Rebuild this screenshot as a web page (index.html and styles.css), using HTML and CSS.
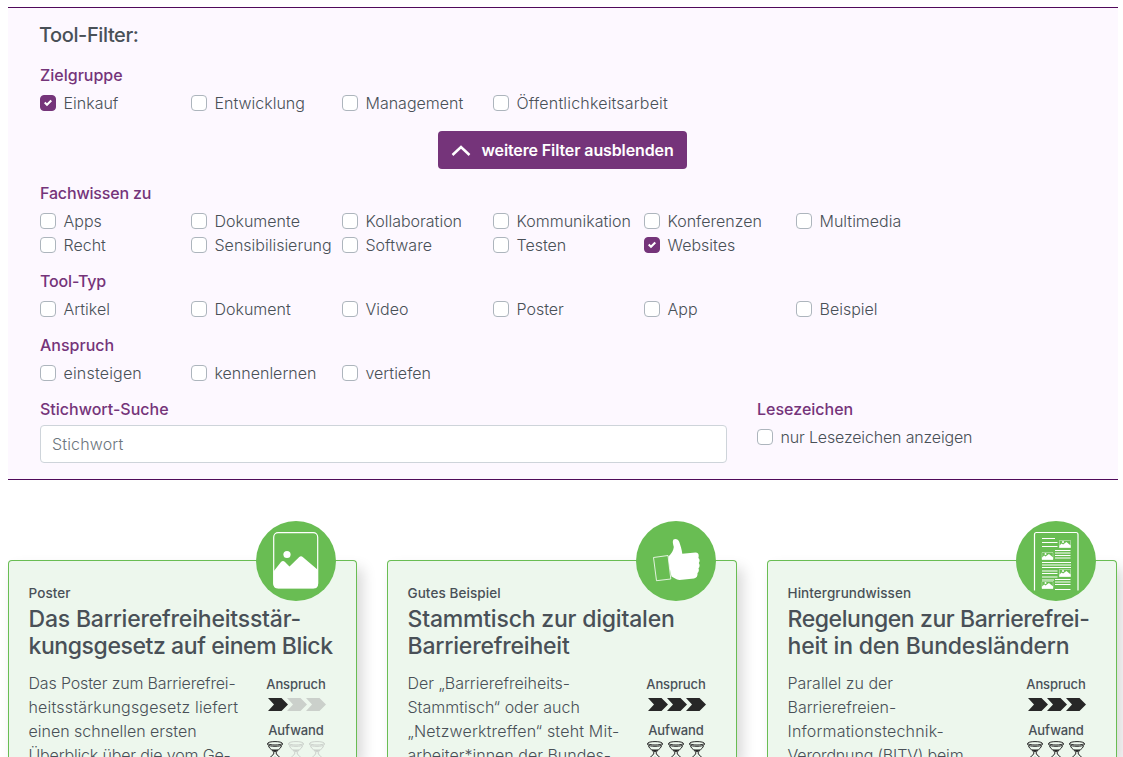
FILE: index.html
```html
<!DOCTYPE html>
<html lang="de">
<head>
    <meta charset="UTF-8">
    <meta name="viewport" content="width=device-width, initial-scale=1.0">
    <title>Tool-Filter</title>
    <link rel="stylesheet" href="styles.css">
</head>
<body>
    <svg class="sprite" xmlns="http://www.w3.org/2000/svg">
        <symbol id="arrow" viewBox="0 0 20 13">
            <path d="M0 0h13.5L20 6.5 13.5 13H0l6-6.5z"/>
        </symbol>
        <symbol id="hourglass" viewBox="0 0 16 24">
            <g fill="none" stroke="currentColor" stroke-width="1">
                <ellipse cx="8" cy="2.300" rx="7.300" ry="1.700"/>
                <path d="M.7 2.300v1.500C2 5.800 14 5.800 15.300 3.800V2.300M1.500 5C2.500 8.500 6.500 9 7 12c-.5 3-5.500 4-6.300 8M14.500 5C13.500 8.500 9.500 9 9 12c.5 3 5.500 4 6.300 8"/>
                <ellipse cx="8" cy="21.500" rx="7.300" ry="1.700"/>
            </g>
            <path d="M4.500 8.200q3.500.8 7 0L8.500 11h-1zM8 15.500l2.500 3h-5z" fill="currentColor"/>
        </symbol>
        <symbol id="picture" viewBox="0 0 12 8">
            <rect x=".3" y=".3" width="11.4" height="7.4" rx="1" fill="none" stroke="#fff" stroke-width=".5"/>
            <circle cx="4" cy="2.1" r="1" fill="#fff"/>
            <path d="M.3 5.7l2.3-2.3 1.500 1.200L7.400 2l4.300 3.600v2.100H.3z" fill="#fff"/>
        </symbol>
    </svg>

    <form class="filter">
        <h2>Tool-Filter:</h2>

        <div class="group">
            <h3>Zielgruppe</h3>
            <div class="options">
                <label><input type="checkbox" checked><span>Einkauf</span></label>
                <label><input type="checkbox"><span>Entwicklung</span></label>
                <label><input type="checkbox"><span>Management</span></label>
                <label><input type="checkbox"><span class="wide">Öffentlichkeitsarbeit</span></label>
            </div>
        </div>

        <button type="button" class="button">
            <svg width="20" height="12" viewBox="0 0 20 12"><path d="M1.500 11L10 3l8.500 8" fill="none" stroke="#fff" stroke-width="2.500"/></svg>
            <span>weitere Filter ausblenden</span>
        </button>

        <div class="group">
            <h3 class="narrow">Fachwissen zu</h3>
            <div class="options">
                <label><input type="checkbox"><span>Apps</span></label>
                <label><input type="checkbox"><span>Dokumente</span></label>
                <label><input type="checkbox"><span>Kollaboration</span></label>
                <label><input type="checkbox"><span>Kommunikation</span></label>
                <label><input type="checkbox"><span>Konferenzen</span></label>
                <label><input type="checkbox"><span>Multimedia</span></label>
                <label><input type="checkbox"><span>Recht</span></label>
                <label><input type="checkbox"><span>Sensibilisierung</span></label>
                <label><input type="checkbox"><span>Software</span></label>
                <label><input type="checkbox"><span>Testen</span></label>
                <label><input type="checkbox" checked><span>Websites</span></label>
            </div>
        </div>

        <div class="group">
            <h3 class="narrow">Tool-Typ</h3>
            <div class="options">
                <label><input type="checkbox"><span>Artikel</span></label>
                <label><input type="checkbox"><span>Dokument</span></label>
                <label><input type="checkbox"><span>Video</span></label>
                <label><input type="checkbox"><span>Poster</span></label>
                <label><input type="checkbox"><span>App</span></label>
                <label><input type="checkbox"><span>Beispiel</span></label>
            </div>
        </div>

        <div class="group">
            <h3>Anspruch</h3>
            <div class="options">
                <label><input type="checkbox"><span class="wide">einsteigen</span></label>
                <label><input type="checkbox"><span>kennenlernen</span></label>
                <label><input type="checkbox"><span>vertiefen</span></label>
            </div>
        </div>

        <div class="search-row">
            <div class="search">
                <h3>Stichwort-Suche</h3>
                <input type="text" class="search-input" placeholder="Stichwort">
            </div>
            <div class="bookmarks">
                <h3>Lesezeichen</h3>
                <label><input type="checkbox"><span class="narrow">nur Lesezeichen anzeigen</span></label>
            </div>
        </div>
    </form>

    <div class="cards">
        <article class="card">
            <div class="badge">
                <svg width="80" height="80" viewBox="0 0 80 80">
                    <rect x="17.700" y="11.700" width="44" height="55" rx="4.500" fill="none" stroke="#fff" stroke-width="1.200"/>
                    <circle cx="31" cy="33.500" r="3.600" fill="#fff"/>
                    <path d="M17.500 50.500l7.500-9.500q2-2 4 0l4.500 4.500L43 36.200q2-1.700 4 0l15 12.800v14q0 4.500-4.500 4.500H22q-4.500 0-4.500-4.500z" fill="#fff"/>
                </svg>
            </div>
            <p class="type">Poster</p>
            <h4>Das Barrierefreiheitsstär-<br><span class="tight">kungsgesetz auf einem Blick</span></h4>
            <div class="card-body">
                <p class="text"><span class="narrow">Das Poster zum Barrierefrei-</span><br><span class="wide">heitsstärkungsgesetz liefert</span><br>einen schnellen ersten<br><span class="narrow">Überblick über die vom Ge-</span></p>
                <div class="rating">
                    <p>Anspruch</p>
                    <div class="arrows">
                        <svg><use href="#arrow"/></svg><svg class="off"><use href="#arrow"/></svg><svg class="off"><use href="#arrow"/></svg>
                    </div>
                    <p>Aufwand</p>
                    <div class="glasses">
                        <svg><use href="#hourglass"/></svg><svg class="off"><use href="#hourglass"/></svg><svg class="off"><use href="#hourglass"/></svg>
                    </div>
                </div>
            </div>
        </article>

        <article class="card">
            <div class="badge">
                <svg width="80" height="80" viewBox="0 0 80 80">
                    <path d="M17.500 36.500l14.500-2 2.800 23.500-14.300 1.700z" fill="none" stroke="#fff" stroke-width=".8" stroke-linejoin="round"/>
                    <path d="M32.500 35.500c3-3 5-6 5.300-9.500-.8-3-1.600-6-.3-7.500 2-1.500 5 0 5.800 2.500 1.200 4 2.500 7 3 11.800L59.500 31.500c2.300 0 3.500 1.700 3.200 3.800l-.3 1.700c1.500 1.200 1.600 3.500.4 5 1.200 1.800 1 4-.3 5.200.8 2 .2 3.800-1 4.800.3 3-.8 5-3.500 5.400L43.500 59c-3.500-.5-5.500-2.500-8-3.500-1.500-6-3-14-3-20z" fill="#fff"/>
                </svg>
            </div>
            <p class="type">Gutes Beispiel</p>
            <h4>Stammtisch zur digitalen<br>Barrierefreiheit</h4>
            <div class="card-body">
                <p class="text">Der „Barrierefreiheits-<br>Stammtisch“ oder auch<br><span class="wide">„Netzwerktreffen“ steht Mit-</span><br>arbeiter*innen der Bundes-</p>
                <div class="rating">
                    <p>Anspruch</p>
                    <div class="arrows">
                        <svg><use href="#arrow"/></svg><svg><use href="#arrow"/></svg><svg><use href="#arrow"/></svg>
                    </div>
                    <p>Aufwand</p>
                    <div class="glasses">
                        <svg><use href="#hourglass"/></svg><svg><use href="#hourglass"/></svg><svg><use href="#hourglass"/></svg>
                    </div>
                </div>
            </div>
        </article>

        <article class="card">
            <div class="badge">
                <svg width="80" height="80" viewBox="0 0 80 80">
                    <path d="M18.500 69.500V13.500q0-2 2-2h39.500q2 0 2 2V69.500" fill="none" stroke="#fff" stroke-width="1.200"/>
                    <path d="M26 17.500h13M26 21.500h15.500M26 25.500h15.500M39 29.500h15.500M39 32h15.500M39 34.500h15.500M39 37h15.500M26 41.500h29M26 44h29M26 46.500h29M26 50h15.500M26 52.500h15.500M26 56h15.500M39 58.500h15.500M39 61h15.500M39 63.500h15.500M26 59h12M39 68.500h15.500" stroke="#fff" stroke-width="1.100" fill="none"/>
                    <use href="#picture" x="43" y="19" width="12" height="8"/>
                    <use href="#picture" x="25.500" y="31" width="12" height="8"/>
                    <use href="#picture" x="43" y="48" width="12" height="8"/>
                    <use href="#picture" x="25.500" y="60" width="12" height="8"/>
                </svg>
            </div>
            <p class="type">Hintergrundwissen</p>
            <h4><span class="tight">Regelungen zur Barrierefrei-</span><br>heit in den Bundesländern</h4>
            <div class="card-body">
                <p class="text">Parallel zu der<br>Barrierefreien-<br><span class="wide">Informationstechnik-</span><br><span class="narrow">Verordnung (BITV) beim</span></p>
                <div class="rating">
                    <p>Anspruch</p>
                    <div class="arrows">
                        <svg><use href="#arrow"/></svg><svg><use href="#arrow"/></svg><svg><use href="#arrow"/></svg>
                    </div>
                    <p>Aufwand</p>
                    <div class="glasses">
                        <svg><use href="#hourglass"/></svg><svg><use href="#hourglass"/></svg><svg><use href="#hourglass"/></svg>
                    </div>
                </div>
            </div>
        </article>
    </div>
</body>
</html>
```
FILE: styles.css
```css
* {
    box-sizing: border-box;
}
body {
    font-family: Inter, "Liberation Sans", sans-serif;
    font-size: 16px;
    font-weight: 300;
    line-height: 24px;
    color: #495057;
    background: #fff;
    margin: 0;
    padding: 7px 5px 0 8px;
    height: 757px;
    overflow: hidden;
}
h2, h3, h4, p {
    margin: 0;
}
.sprite {
    display: none;
}
.filter {
    height: 473px;
    padding: 15px 32px 0;
    background: #fdf8ff;
    border-top: 1px solid #500a5a;
    border-bottom: 1px solid #500a5a;
}
.filter h2 {
    font-size: 20px;
    font-weight: 500;
    line-height: 24px;
    letter-spacing: -0.4px;
    margin-left: -1px;
    margin-bottom: 16px;
}
.filter h3 {
    font-size: 16px;
    font-weight: 500;
    line-height: 24px;
    color: #75347a;
    margin-bottom: 4px;
}
.wide {
    letter-spacing: 0.18px;
}
.narrow {
    letter-spacing: -0.16px;
}
.group {
    margin-bottom: 12px;
}
.options {
    display: grid;
    grid-template-columns: repeat(4, 151px) 152px 151px;
}
label {
    display: flex;
    align-items: center;
    height: 24px;
    white-space: nowrap;
}
input[type="checkbox"] {
    appearance: none;
    flex: none;
    width: 16px;
    height: 16px;
    margin: 0 7.5px 0 0;
    background: #fff;
    border: 1px solid #adb5bd;
    border-radius: 4px;
}
input[type="checkbox"]:checked {
    border-color: #75347a;
    background: #75347a url("data:image/svg+xml,%3Csvg xmlns='http://www.w3.org/2000/svg' viewBox='0 0 8 8'%3E%3Cpath fill='%23fff' d='M6.564.75l-3.590 3.612-1.538-1.550L0 4.260 2.974 7.250 8 2.193z'/%3E%3C/svg%3E") center / 8px 8px no-repeat;
}
.button {
    display: flex;
    align-items: center;
    width: 249px;
    height: 38px;
    margin: 16px auto 12px 398px;
    padding: 0 13px;
    font-family: inherit;
    font-size: 16px;
    font-weight: 600;
    letter-spacing: -0.12px;
    color: #fff;
    background: #75347a;
    border: none;
    border-radius: 4px;
    white-space: nowrap;
}
.button svg {
    flex: none;
    margin-right: 10.5px;
}
.search-row {
    display: flex;
    gap: 30px;
}
.search {
    width: 687px;
}
.search-input {
    display: block;
    width: 100%;
    height: 38px;
    padding: 0 11px;
    font: inherit;
    letter-spacing: 0.15px;
    border: 1px solid #ced4da;
    border-radius: 4px;
}
.search-input::placeholder {
    color: #6c757d;
}
.cards {
    display: grid;
    grid-template-columns: 349px 350px 350px;
    gap: 30px;
    margin-top: 80px;
}
.card {
    position: relative;
    height: 197px;
    padding: 22px 20px 0 19.5px;
    background: #edf7ed;
    border: 1px solid #69bd53;
    border-bottom: none;
    border-radius: 4px 4px 0 0;
    box-shadow: 6px 8px 14px rgba(0, 0, 0, 0.15);
}
.badge {
    position: absolute;
    top: -40px;
    right: 20px;
    width: 80px;
    height: 80px;
    background: #69bd53;
    border-radius: 50%;
}
.badge svg {
    display: block;
}
.type {
    font-size: 13.5px;
    font-weight: 500;
    line-height: 20px;
    letter-spacing: 0.08px;
}
.card h4 {
    font-size: 23px;
    font-weight: 500;
    line-height: 27px;
    letter-spacing: -0.2px;
    margin: 3px 0 11px;
    white-space: nowrap;
}
.card h4 .tight {
    letter-spacing: -0.42px;
}
.card-body {
    display: flex;
    justify-content: space-between;
}
.text {
    white-space: nowrap;
}
.rating {
    flex: none;
    width: 80px;
    font-size: 13px;
    font-weight: 500;
    letter-spacing: -0.1px;
    text-align: center;
}
.rating p {
    line-height: 27px;
}
.rating svg {
    display: block;
    fill: #272727;
    color: #272727;
}
.arrows {
    display: flex;
    justify-content: center;
    height: 19px;
}
.arrows svg {
    width: 20px;
    height: 13px;
    margin-right: -1px;
}
.arrows .off {
    fill: #cbd0cb;
}
.glasses {
    display: flex;
    justify-content: center;
    gap: 5px;
    margin-top: -3px;
}
.glasses svg {
    width: 16px;
    height: 24px;
}
.glasses .off {
    color: #cbd0cb;
    fill: #cbd0cb;
}
```
